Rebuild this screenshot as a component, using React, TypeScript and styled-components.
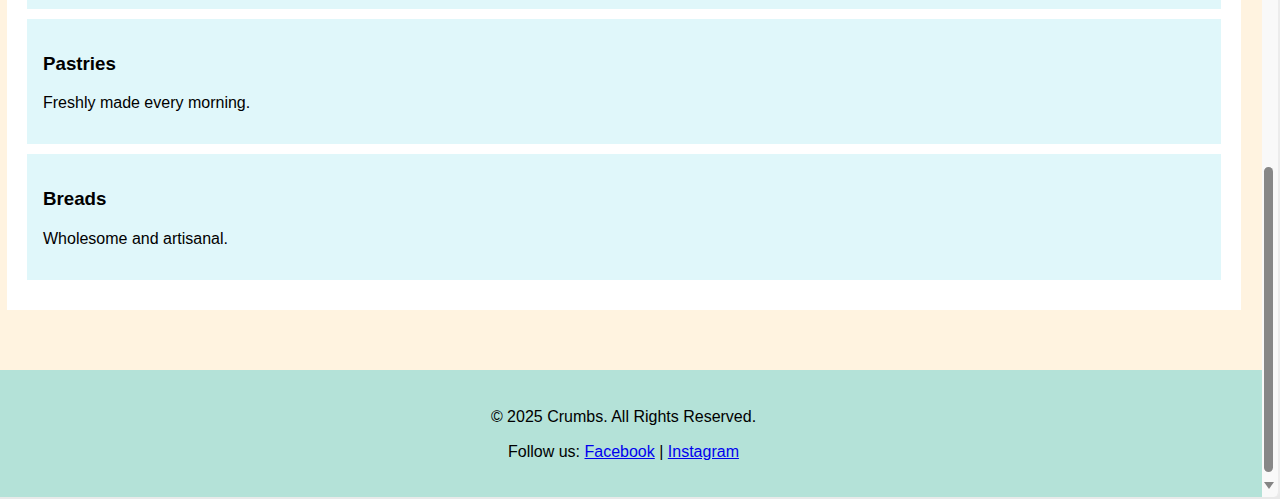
import React from "react";
import styled, { createGlobalStyle } from "styled-components";

const GlobalStyle = createGlobalStyle`
  html, body {
    margin: 0;
    padding: 0;
    background: #e9e9e9;
    font-family: "Liberation Sans", Arial, sans-serif;
    color: #000;
  }
`;

const Page = styled.div`
  display: flex;
  height: 497px;
  overflow: hidden;
`;

const Content = styled.div`
  flex: 1;
  min-width: 0;
  display: flex;
  flex-direction: column;
  background: #fff3e0;
  overflow: hidden;
`;

const Panel = styled.main`
  background: #ffffff;
  margin: 0 21px 60px 7px;
  padding: 0 20px 20px;
`;

const CardTail = styled.div`
  height: 9px;
  background: #e0f7fa;
  margin-bottom: 10px;
`;

const Card = styled.section`
  background: #e0f7fa;
  padding: 16px;
  margin-bottom: 10px;
`;

const CardTitle = styled.h3`
  margin: 17.72px 0 19.72px;
  font-size: 18.72px;
  font-weight: bold;
`;

const CardText = styled.p`
  margin: 16px 0;
  font-size: 16px;
`;

const Footer = styled.footer`
  flex: 1 0 auto;
  background: #b4e2d8;
  padding: 21px 35px 20px 20px;
  text-align: center;
`;

const FooterLine = styled.p`
  margin: 16px 0;
  font-size: 16px;
  line-height: 19px;
`;

const Link = styled.a`
  color: #0000ee;
  text-decoration: underline;
`;

const ScrollBar = styled.div`
  width: 18px;
  flex-shrink: 0;
  display: flex;
  flex-direction: column;
  align-items: flex-start;
  box-sizing: border-box;
  padding: 167px 0 0 2px;
  background: #f9f9f9;
  border-right: 2px solid #ececec;
  border-bottom-right-radius: 6px;
`;

const Thumb = styled.div`
  width: 9px;
  height: 305px;
  border-radius: 5px;
  background: #878787;
`;

const Arrow = styled.svg`
  display: block;
  margin-top: 10px;
`;

const items = [
  { title: "Pastries", text: "Freshly made every morning." },
  { title: "Breads", text: "Wholesome and artisanal." },
];

export default function App() {
  return (
    <>
      <GlobalStyle />
      <Page>
        <Content>
          <Panel>
            <CardTail />
            {items.map((it) => (
              <Card key={it.title}>
                <CardTitle>{it.title}</CardTitle>
                <CardText>{it.text}</CardText>
              </Card>
            ))}
          </Panel>
          <Footer>
            <FooterLine>© 2025 Crumbs. All Rights Reserved.</FooterLine>
            <FooterLine>
              Follow us: <Link href="#">Facebook</Link> | <Link href="#">Instagram</Link>
            </FooterLine>
          </Footer>
        </Content>
        <ScrollBar>
          <Thumb />
          <Arrow width="10" height="7" viewBox="0 0 10 7">
            <path d="M0 0 L10 0 L5 7 Z" fill="#858585" />
          </Arrow>
        </ScrollBar>
      </Page>
    </>
  );
}
